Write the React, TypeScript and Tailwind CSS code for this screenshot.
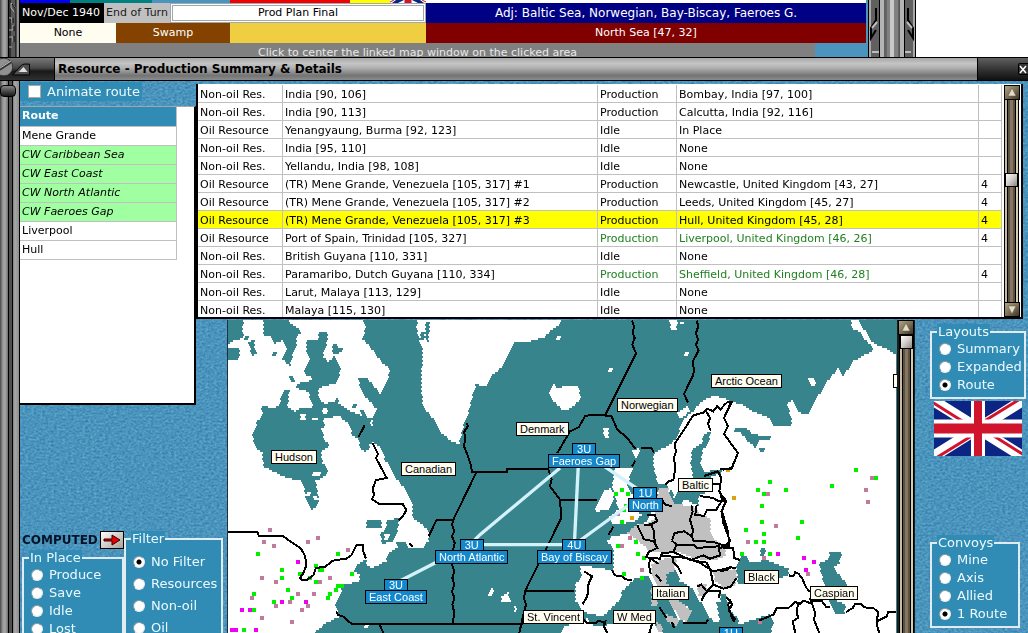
import React, { useMemo, useState } from 'react';

type Point = [number, number];

interface ResourceRow {
  kind: string;
  source: string;
  status: string;
  dest: string;
  turns?: string;
  green?: boolean;
  selected?: boolean;
}

const OIL = 'Oil Resource';
const NON_OIL = 'Non-oil Res.';

const RESOURCES: ResourceRow[] = [
  { kind: NON_OIL, source: 'India [90, 106]', status: 'Production', dest: 'Bombay, India [97, 100]' },
  { kind: NON_OIL, source: 'India [90, 113]', status: 'Production', dest: 'Calcutta, India [92, 116]' },
  { kind: OIL, source: 'Yenangyaung, Burma [92, 123]', status: 'Idle', dest: 'In Place' },
  { kind: NON_OIL, source: 'India [95, 110]', status: 'Idle', dest: 'None' },
  { kind: NON_OIL, source: 'Yellandu, India [98, 108]', status: 'Idle', dest: 'None' },
  { kind: OIL, source: '(TR) Mene Grande, Venezuela [105, 317] #1', status: 'Production', dest: 'Newcastle, United Kingdom [43, 27]', turns: '4' },
  { kind: OIL, source: '(TR) Mene Grande, Venezuela [105, 317] #2', status: 'Production', dest: 'Leeds, United Kingdom [45, 27]', turns: '4' },
  { kind: OIL, source: '(TR) Mene Grande, Venezuela [105, 317] #3', status: 'Production', dest: 'Hull, United Kingdom [45, 28]', turns: '4', selected: true },
  { kind: OIL, source: 'Port of Spain, Trinidad [105, 327]', status: 'Production', dest: 'Liverpool, United Kingdom [46, 26]', turns: '4', green: true },
  { kind: NON_OIL, source: 'British Guyana [110, 331]', status: 'Idle', dest: 'None' },
  { kind: NON_OIL, source: 'Paramaribo, Dutch Guyana [110, 334]', status: 'Production', dest: 'Sheffield, United Kingdom [46, 28]', turns: '4', green: true },
  { kind: NON_OIL, source: 'Larut, Malaya [113, 129]', status: 'Idle', dest: 'None' },
  { kind: NON_OIL, source: 'Malaya [115, 130]', status: 'Idle', dest: 'None' },
];

const ROUTE = [
  { name: 'Mene Grande', sea: false },
  { name: 'CW Caribbean Sea', sea: true },
  { name: 'CW East Coast', sea: true },
  { name: 'CW North Atlantic', sea: true },
  { name: 'CW Faeroes Gap', sea: true },
  { name: 'Liverpool', sea: false },
  { name: 'Hull', sea: false },
];

/* ---------- map data: three sheets, west to east, 3 units per pixel ---------- */

const MID = 762;
const EAST = 1482;

const pts = (text: string, dx = 0): Point[] =>
  text.trim().split(/\s+/).map(p => {
    const [x, y] = p.split(',').map(Number);
    return [x + dx, y] as Point;
  });

// Fills a polygon with 6-unit hexes, odd rows shifted by half a hex
const hexFill = (poly: Point[]) => {
  let d = '';
  const ys = poly.map(p => p[1]);
  const first = Math.floor(Math.min(...ys) / 6);
  const last = Math.ceil(Math.max(...ys) / 6);
  for (let row = first; row <= last; row++) {
    const y = row * 6 + 3;
    const shift = row % 2 ? 3 : 0;
    const xs: number[] = [];
    poly.forEach(([x1, y1], i) => {
      const [x2, y2] = poly[(i + 1) % poly.length];
      if (y1 <= y !== y2 <= y) xs.push(x1 + ((y - y1) * (x2 - x1)) / (y2 - y1));
    });
    xs.sort((a, b) => a - b);
    for (let i = 0; i + 1 < xs.length; i += 2) {
      const a = Math.round((xs[i] - shift) / 6) * 6 + shift;
      const b = Math.round((xs[i + 1] - shift) / 6) * 6 + shift;
      if (b > a) d += `M${a} ${row * 6}H${b}v6H${a}z`;
    }
  }
  return d;
};

const LAND: Point[][] = [
  // North America
  pts('0,0 405,0 420,30 408,60 435,90 465,130 492,155 482,195 462,228 445,205 420,180 398,180 400,205 420,225 436,255 452,275 440,300 440,330 425,320 412,350 400,385 418,400 440,370 460,385 480,430 510,480 538,515 560,560 560,600 590,620 606,640 606,670 590,690 550,690 540,670 512,670 515,690 490,702 480,730 440,750 424,745 420,725 395,740 385,760 405,770 395,792 350,800 340,840 325,860 340,895 300,915 276,936 260,950 0,950'),
  // Greenland
  pts('575,0 572,35 582,70 590,100 585,210 592,270 620,300 640,340 680,372 700,378 710,330 722,300 738,240 750,200 780,205 800,170 825,150 845,115 865,72 890,75 955,58 972,40 1002,20 1005,0'),
  // Iceland and small islands
  pts('206,225 222,200 235,212 250,205 295,205 303,240 284,262 252,280 240,270 225,255', MID),
  pts('366,330 388,330 384,345 390,362 378,362', MID),
  pts('384,150 396,150 396,162 384,162', MID),
  pts('228,54 240,54 240,66 228,66', MID),
  pts('612,102 624,102 624,114 612,114', MID),
  pts('600,10 612,10 612,18 600,18', MID),
  pts('564,6 594,6 588,40 576,36', MID),
  pts('28,815 42,810 36,832 26,832', MID),
  pts('66,835 84,822 92,850 62,852', MID),
  pts('100,860 112,870 104,882', MID),
  pts('588,285 625,262 630,280 600,302', MID),
  // Ireland and Britain
  pts('372,520 395,510 402,545 385,575 345,582 356,545', MID),
  pts('405,450 458,450 440,505 462,535 452,572 484,590 462,612 396,620 386,600 418,572 402,535 396,500', MID),
  pts('454,395 480,392 466,425', MID),
  // Scandinavia, Europe and Russia
  [
    ...pts('530,482 520,440 522,405 560,385 590,362 600,330 622,290 642,280 660,252 700,232 735,242', MID),
    ...pts('30,250 70,262 100,280 148,300 160,325 215,325 212,290 200,262 215,245 240,285 265,290 285,250 320,192 355,150 370,180 395,132 440,108 462,95 445,70 420,42 395,30 395,8 415,8 435,40 462,78 510,98 540,112 540,950 150,950 160,915 150,888 60,918 45,905 22,880 18,830 0,830', EAST),
    ...pts('720,915 700,915 680,880 660,850 640,812 600,790 588,755 560,762 560,800 600,850 638,880 622,912 598,905 580,870 545,815 520,800 505,775 470,778 430,815 415,850 385,880 365,895 320,885 300,870 288,850 285,800 306,780 300,742 370,752 400,760 402,690 380,672 400,652 440,650 470,622 500,612 512,588 530,565 535,510', MID),
  ],
  // North Africa
  pts('240,950 250,928 320,902 345,925 372,922 440,915 510,915 545,930 550,950', MID),
];

const SEA: Point[][] = [
  // Hudson Bay
  pts('106,264 128,264 128,274 156,266 176,212 190,216 184,266 206,281 226,268 262,268 258,308 290,300 300,325 282,332 300,370 310,385 285,400 290,435 305,452 300,470 268,490 280,552 260,578 240,545 230,490 190,482 150,465 112,445 110,405 86,385 80,345 95,310 110,290'),
  // Arctic channels
  pts('241,68 276,68 276,44 302,44 306,64 291,114 306,136 324,114 336,130 346,150 331,196 306,201 276,211 276,236 296,258 326,250 331,236 340,258 376,280 400,290 436,300 432,330 405,370 380,352 370,320 340,295 290,300 255,300 261,268 246,221 211,211 211,196 251,191 236,161 251,126 241,100'),
  pts('186,172 198,172 208,192 196,196'),
  pts('0,0 54,0 48,36 54,51 42,66 28,66 6,78 0,78'),
  pts('0,92 36,92 42,106 34,126 0,126'),
  pts('54,54 66,54 66,66 54,66'),
  pts('66,74 84,66 84,90 92,110 78,112'),
  pts('114,0 176,0 206,24 228,42 211,56 211,81 202,106 192,146 170,122 181,96 171,66 146,78 136,54 111,51'),
  pts('138,100 150,100 150,112 138,112'),
  pts('336,88 348,88 348,100 330,112 318,100 318,78 330,78'),
  pts('398,175 420,190 455,230 445,262 420,240 400,205'),
  pts('380,258 392,258 392,270 380,270'),
  pts('400,275 412,275 424,306 412,306'),
  // Gulf of St Lawrence
  pts('420,608 466,608 466,628 420,628'),
  pts('462,650 480,630 484,606 520,600 515,640 500,672 470,676'),
  pts('398,350 436,350 430,395 408,398'),
  pts('598,12 612,12 606,70 598,60'),
  pts('582,40 594,40 594,64 582,64'),
  // Baltic
  pts('636,395 664,378 672,348 694,342 688,364 668,400 660,440 676,462 728,452 728,462 688,478 690,520 655,532 656,562 636,556 610,540 606,562 580,560 590,522 604,500 640,482 632,440', MID),
  pts('525,495 560,500 575,520 590,560 575,560 566,512 540,512', MID),
  pts('762,330 790,330 782,340 762,342', MID),
  // White Sea
  pts('42,330 80,332 102,350 150,354 150,364 112,370 110,392 86,372 60,342', EAST),
  pts('118,390 132,390 132,402 118,402', EAST),
  // Black Sea, Azov, Caspian
  pts('62,715 78,716 84,728 112,735 132,722 152,730 206,752 206,772 175,780 172,798 52,796 50,745', EAST),
  pts('124,690 138,690 130,714 120,710', EAST),
  pts('328,704 366,704 358,735 340,748 366,780 384,806 340,842 376,862 372,890 346,890 326,842 310,790 297,735 325,725', EAST),
  // Aegean
  pts('710,850 742,850 748,878 770,895 776,912 720,912', MID),
  pts('500,0 532,0 532,112 510,98 460,76 436,40 425,0', EAST),
];

const OCCUPIED: Point[][] = [
  pts('536,512 562,508 578,545 582,560 640,562 660,590 690,600 690,640 700,660 735,684 738,712 700,728 650,722 600,705 506,700 490,680 440,645 470,622 505,615 525,600 530,572', MID),
  pts('512,740 560,720 590,722 582,760 560,768 560,795 600,850 636,880 620,912 600,902 580,870 545,820 518,780', MID),
  pts('512,810 532,812 532,862 516,868', MID),
  pts('560,890 600,905 590,925 560,910', MID),
  pts('528,905 550,930 545,945 530,935', MID),
  pts('700,760 745,752 770,765 765,805 735,812 705,790', MID),
  pts('0,760 45,752 48,795 0,810', EAST),
  pts('652,800 680,796 676,836 656,836', MID),
];

const SPECKS: Point[][] = [
  pts('222,288 238,288 238,304 222,304'),
  pts('288,270 304,270 304,288 288,288'),
  pts('245,175 257,175 257,186 245,186'),
  pts('258,462 282,462 282,472 258,472'),
  pts('240,522 252,522 252,534 240,534'),
  pts('262,536 274,536 274,548 262,548'),
  pts('474,650 492,650 486,664 474,664'),
  pts('414,918 426,918 426,930 414,930'),
  pts('264,176 288,186 282,206 270,200', EAST),
  pts('395,6 416,6 436,40 458,76 444,76 420,42 395,30', EAST),
];

const BORDERS: Point[][] = [
  pts('6,641 94,641 98,653 170,653 190,668 205,678 225,692 238,715 240,745 232,765 222,780 228,787 242,786 262,772 270,750 298,746 320,728 360,722 376,712 392,680 412,680 410,695 420,722'),
  pts('416,322 398,356'),
  pts('440,376 456,408 450,420 482,480 450,486 440,512 444,530 438,544 460,558 530,558 541,576 530,596 518,606'),
  pts('722,316 726,324 714,342 718,360 714,385 724,410 734,440 738,462 842,462 842,453 970,453'),
  pts('750,465 682,605 632,605 608,655'),
  pts('682,605 678,620 685,640 678,655 686,675 680,700 685,720 678,740 685,760 679,780 685,800 678,820 685,840 679,860 685,885 680,914'),
  pts('330,880 336,890 352,896 376,917 890,917'),
  pts('460,918 472,945'),
  pts('550,676 560,686'),
  pts('456,8 462,25 458,45 464,60 457,80 468,106 376,290 316,293 296,328 270,340 232,405', MID),
  pts('376,293 394,293 412,335 440,358 466,392', MID),
  pts('650,8 655,25 648,45 654,65 648,80 656,98 638,130 642,155 640,170 612,228 624,254', MID),
  pts('482,390 514,390 522,404', MID),
  pts('466,428 456,446', MID),
  pts('205,455 215,485 210,505 240,545 244,600 135,820 132,840 138,860 130,890 118,945', MID),
  pts('236,545 350,545', MID),
  pts('135,820 282,820', MID),
  pts('400,626 386,650', MID),
  pts('745,250 732,262 722,274 712,264 700,280 682,272 670,284 640,292 584,378 588,400 582,420 586,450 580,486 566,490 556,500', MID),
  pts('676,275 690,300 684,318 692,338', MID),
  pts('754,250 732,300 744,325 732,348 774,405 756,450 728,455', MID),
  pts('714,460 672,474', MID),
  pts('714,460 724,480 718,520 728,545 712,570 706,580', MID),
  pts('698,498 720,498', MID),
  pts('640,490 632,484 618,494', MID),
  pts('724,530 738,548 726,580 744,640 748,684 728,690', MID),
  pts('660,534 700,540 716,550 738,548', MID),
  pts('650,562 646,590 672,594 682,575 706,575', MID),
  pts('634,562 638,580 630,605 640,640 632,655', MID),
  pts('545,545 556,560 575,564', MID),
  pts('500,590 524,590 532,610 512,618 522,640 524,670 492,664 472,622', MID),
  pts('492,622 518,622', MID),
  pts('522,672 532,690 506,702 498,718 540,722 546,706 580,702', MID),
  pts('576,668 584,645 612,640 636,655 640,668 700,672 738,684', MID),
  pts('576,668 590,680 640,680 650,690 716,685 720,712 690,722 670,712 632,726 580,702 590,680', MID),
  pts('546,714 580,716 578,730 594,746 604,768', MID),
  pts('536,738 512,722 506,738 512,768', MID),
  pts('580,716 620,720 660,735 700,760 755,748', MID),
  pts('640,728 680,734 692,760 700,800 680,820 664,800 652,806', MID),
  pts('700,800 730,812 752,806 770,780', MID),
  pts('680,820 720,820 716,840', MID),
  pts('664,850 672,832 684,820', MID),
  pts('396,756 404,772 430,776 436,784 456,786', MID),
  pts('312,760 336,775 326,795 322,835 308,858', MID),
  pts('312,905 322,915 348,916 355,908 372,914', MID),
  pts('378,905 372,925 382,945', MID),
  pts('516,918 508,945', MID),
  pts('528,770 544,790', MID),
  pts('538,868 560,900', MID),
  pts('576,912 582,930', MID),
  pts('608,915 678,915 684,905', MID),
  pts('738,838 752,850 744,860 756,900 764,912', MID),
  pts('20,252 36,252 12,300 24,325 12,348 54,405 34,452 0,452', EAST),
  pts('0,520 6,545 18,550 4,580 10,615 30,668 12,686 0,690', EAST),
  pts('12,690 40,690 42,720 60,726', EAST),
  pts('0,760 22,755 30,748 48,750', EAST),
  pts('206,772 220,775 226,762 236,768 246,780 258,808 270,822', EAST),
  pts('30,845 36,860 26,878 46,905', EAST),
  pts('116,908 160,890 170,870 205,870 226,852 240,858 250,848 270,855 278,845', EAST),
  pts('236,852 230,880 234,900 218,910 226,945', EAST),
  pts('270,840 286,885 282,905 298,945', EAST),
  pts('270,848 305,848 318,866 330,868', EAST),
  pts('378,882 398,870 405,858 424,858 432,868 460,870 474,882 470,920 478,945', EAST),
  pts('470,910 500,895 505,882 540,882', EAST),
];

const LANES: Point[][] = [
  pts('520,790 640,728'),
  pts('730,682 762,650 1002,450'),
  pts('722,680 1022,680'),
  pts('295,440 283,680', MID),
  pts('360,436 490,525', MID),
  pts('290,675 450,558', MID),
];

const DOTS: { color: string; at: Point[] }[] = [
  {
    color: '#c07a9c',
    at: [
      ...pts('126,630 108,666 138,678 270,654 240,666 360,690 102,774 144,786 306,774 276,786 210,822 258,822 72,834 186,846 144,858 222,870 240,858 102,894 192,906'),
      ...pts('408,582 444,654 420,678 480,750', MID),
      ...pts('450,474 432,510 438,546 138,522 162,618 78,666 126,714 258,762 114,906', EAST),
    ],
  },
  {
    color: '#00f000',
    at: [
      ...pts('90,702 330,702 162,750 162,774 216,762 264,738 276,750 282,750 246,774 264,786 372,762 330,798 336,798 342,798 324,810 306,822 300,834 180,810 192,834 78,822 138,846 78,870 48,930'),
      ...pts('402,522 420,510 438,522 420,606 426,570 432,558 408,678 462,666 468,702 486,714 426,762 480,774', MID),
      ...pts('402,450 462,474 330,498 144,486 108,510 192,510 126,522 120,558 120,606 240,606 72,630 126,642 228,654 102,666 126,666 60,702 144,702', EAST),
    ],
  },
  {
    color: '#f000f0',
    at: [...pts('210,726 162,846 234,846 42,870 66,870 12,930 24,930 84,930'), ...pts('168,702 246,714 276,726 252,750', EAST)],
  },
  { color: '#dca010', at: [...pts('450,594 756,534', MID), ...pts('18,450', EAST)] },
];

const SEA_LABELS = [
  { name: 'Hudson', x: 43, y: 130 },
  { name: 'Canadian', x: 173, y: 142 },
  { name: 'Norwegian', x: 389, y: 78 },
  { name: 'Denmark', x: 288, y: 102 },
  { name: 'Arctic Ocean', x: 483, y: 54 },
  { name: 'Baltic', x: 450, y: 158 },
  { name: 'Italian', x: 424, y: 266 },
  { name: 'St. Vincent', x: 295, y: 290 },
  { name: 'W Med', x: 385, y: 290 },
  { name: 'Black', x: 516, y: 250 },
  { name: 'Caspian', x: 582, y: 266 },
];

const CONVOYS = [
  { name: 'Faeroes Gap', units: '3U', x: 320, y: 123 },
  { name: 'North', units: '1U', x: 400, y: 167 },
  { name: 'Bay of Biscay', units: '4U', x: 309, y: 219 },
  { name: 'North Atlantic', units: '3U', x: 207, y: 219 },
  { name: 'East Coast', units: '3U', x: 137, y: 259 },
  { name: 'E Med', units: '1U', x: 483, y: 307 },
];

const toPoints = (line: Point[]) => line.map(p => p.join(',')).join(' ');

const ConvoyMap: React.FC = () => {
  const shapes = useMemo(() => {
    const join = (polys: Point[][]) => polys.map(hexFill).join('');
    return { land: join(LAND), sea: join(SEA), specks: join(SPECKS), occupied: join(OCCUPIED) };
  }, []);

  return (
    <div className="relative flex-1 min-w-0 overflow-hidden bg-[#38848c] border-l border-[#203040] font-['Liberation_Sans',Arial,sans-serif] text-[11px]">
      <svg className="w-[668px] h-[313px] max-w-none" viewBox="6 6 2004 939" fill="none" shapeRendering="crispEdges" aria-label="Convoy map">
        <path d={shapes.land} fill="#fff" />
        <path d={shapes.sea} fill="#38848c" />
        <path d={shapes.occupied} fill="#c0c0c0" />
        <path d={shapes.specks} fill="#fff" />
        {DOTS.map(group => (
          <path key={group.color} fill={group.color} d={group.at.map(([x, y]) => `M${x} ${y}h12v12h-12z`).join('')} />
        ))}
        {BORDERS.map((line, i) => (
          <polyline key={i} points={toPoints(line)} stroke="#000" strokeWidth="6" />
        ))}
        <g stroke="#d4f2fc" strokeWidth="10" shapeRendering="auto">
          {LANES.map((line, i) => (
            <polyline key={i} points={toPoints(line)} />
          ))}
        </g>
      </svg>
      {SEA_LABELS.map(label => (
        <span
          key={label.name}
          className="absolute h-[14px] px-[3px] leading-[12px] whitespace-nowrap bg-[#fffcf0] border border-black text-black"
          style={{ left: label.x, top: label.y }}
        >
          {label.name}
        </span>
      ))}
      <span className="absolute right-0 top-[54px] w-1 h-[14px] bg-[#fffcf0] border-y border-l border-black" />
      {CONVOYS.map(convoy => (
        <div key={convoy.name} className="absolute flex flex-col items-center text-white whitespace-nowrap" style={{ left: convoy.x, top: convoy.y }}>
          <span className="h-[11px] px-1 leading-[10px] bg-[#1488cc] border border-b-0 border-black">{convoy.units}</span>
          <span className="h-[14px] px-[3px] leading-[12px] bg-[#1488cc] border border-black">{convoy.name}</span>
        </div>
      ))}
    </div>
  );
};

/* ---------- window furniture ---------- */

const Texture: React.FC = () => (
  <svg className="absolute inset-0 w-full h-full opacity-50 mix-blend-overlay pointer-events-none" aria-hidden="true">
    <filter id="cloth" colorInterpolationFilters="sRGB">
      <feTurbulence type="fractalNoise" baseFrequency="0.35 0.5" numOctaves="2" />
      <feColorMatrix type="saturate" values="0" />
      <feComponentTransfer>
        <feFuncA type="linear" slope="0" intercept="1" />
      </feComponentTransfer>
    </filter>
    <rect width="100%" height="100%" filter="url(#cloth)" />
  </svg>
);

const ScrollButton: React.FC<{ up?: boolean }> = ({ up }) => (
  <button
    type="button"
    aria-label={up ? 'Scroll up' : 'Scroll down'}
    className="w-4 h-[15px] shrink-0 flex items-center justify-center border border-black bg-linear-to-br from-[#b0a488] via-[#7c7058] to-[#3c3426]"
  >
    <svg width="10" height="9" viewBox="0 0 10 9">
      <path d={up ? 'M5 0 9 8H1z' : 'M5 9 9 1H1z'} fill="#e4dcc4" stroke="#5c523c" strokeWidth="0.5" />
    </svg>
  </button>
);

const TRACK =
  'bg-[linear-gradient(to_right,#000_0_1px,#c8bca4_1px_3px,#000_3px_4px,#5c5040_4px_6px,#847660_6px_9px,#5c5040_9px_11px,#000_11px_12px,#d8ccb4_12px_14px,#000_14px)]';

const Thumb = () => <div className="w-[13px] h-[14px] mx-auto shrink-0 border border-black bg-linear-to-br from-white via-[#d0ccc8] to-[#8c8884]" />;

const METAL =
  'bg-[linear-gradient(to_right,#555_0_1px,#8c8c8c_2px,#a8a8a8_5px,#6c6c6c_8px,#000_8px_9px,#505050_9px_12px,#000_12px_13px,#808080_13px,#a8a8a8_15px,#8c8c8c_19px,#000_19px)]';

const Radio: React.FC<{ group: string; label: string; checked: boolean; onSelect: () => void; tall?: boolean }> = ({ group, label, checked, onSelect, tall }) => (
  <label className={`flex items-center gap-1.5 whitespace-nowrap ${tall ? 'h-[22px]' : 'h-[18px]'}`}>
    <input
      type="radio"
      name={group}
      checked={checked}
      onChange={onSelect}
      className="appearance-none w-3 h-3 shrink-0 rounded-full bg-white border border-[#8a9aa4] border-r-[#e8e8e8] border-b-[#e8e8e8] checked:bg-[radial-gradient(circle,#000_0_2px,#fff_3px)]"
    />
    {label}
  </label>
);

const RadioGroup: React.FC<{ title: string; options: string[]; initial?: string; tall?: boolean; className?: string }> = ({ title, options, initial = '', tall, className = '' }) => {
  const [value, setValue] = useState(initial);
  return (
    <fieldset className={`relative min-w-0 border-2 border-[#e0ecf0] bg-[#308cb4] pl-[7px] pb-[3px] text-[13px] leading-4 text-[#ecfaff] ${tall ? 'pt-1' : ''} ${className}`}>
      <legend className="-ml-0.5 px-px bg-[#308cb4]">{title}</legend>
      {options.map(o => (
        <Radio key={o} group={title} label={o} tall={tall} checked={value === o} onSelect={() => setValue(o)} />
      ))}
    </fieldset>
  );
};

const UnionFlag = ({ className }: { className?: string }) => (
  <svg className={className} viewBox="0 0 88 55" preserveAspectRatio="none" aria-label="United Kingdom">
    <rect width="88" height="55" fill="#0c2484" />
    <path d="M0 0 88 55M88 0 0 55" stroke="#fff" strokeWidth="11" />
    <path d="M-2 1 44 30M90 54 44 25M86 -2 44 24M2 57 44 31" stroke="#d0142c" strokeWidth="3" />
    <path d="M44 0V55" stroke="#fff" strokeWidth="14" />
    <path d="M0 27.5H88" stroke="#fff" strokeWidth="18" />
    <path d="M44 0V55" stroke="#d0142c" strokeWidth="8" />
    <path d="M0 27.5H88" stroke="#d0142c" strokeWidth="10" />
  </svg>
);

const PhaseWindow: React.FC = () => (
  <header className="relative h-[57px] shrink-0 flex bg-white overflow-hidden">
    <div className={`w-5 shrink-0 ${METAL}`}>
      <svg className="w-full h-full" viewBox="0 0 20 57" fill="none">
        <path d="M9 0h7v57H9z" fill="#585858" />
        <path d="M10 0v57M16 0v57" stroke="#000" />
        <path d="m11 3 4 4v6l-4-5zM12 18h-3M12 23v-5M9 30h4v-5M9 37h4v5M9 47h3" stroke="#b0b0b0" />
        <path d="m12 4 3 4v5M13 18v5M14 26v5M14 36v6" stroke="#000" />
      </svg>
    </div>
    <div className="flex-1 min-w-0 flex flex-col bg-[#4a94bd]">
      <div className="h-[3px] flex">
        <div className="w-[50px] bg-[#0000f0]" />
        <div className="w-[82px] bg-[#008080]" />
        <div className="w-[78px]" />
        <div className="w-[120px] bg-[#f00000]" />
        <div className="w-10 bg-[#ffff00]" />
        <svg className="w-9 h-[3px]" viewBox="0 0 36 3" aria-hidden="true">
          <path d="M0 0h36v3H0z" fill="#fff" />
          <path d="M6 0h8l-6 3H2zM30 0h-8l6 3h6z" fill="#0c2484" />
          <path d="M15 0h6v3h-6zM0 2l4-2M36 2l-4-2" fill="#d0142c" stroke="#d0142c" />
        </svg>
        <div className="flex-1 bg-white" />
      </div>
      <div className="h-5 flex text-[11px] leading-5">
        <div className="w-[84px] pl-0.5 bg-black text-white whitespace-nowrap">Nov/Dec 1940</div>
        <div className="w-[66px] bg-[#c0c0c0] text-[#202020] whitespace-nowrap text-center">End of Turn</div>
        <input
          type="text"
          readOnly
          aria-label="Phase"
          value="Prod Plan Final"
          className="w-[256px] h-5 text-center bg-white text-black border-[3px] border-double border-[#a0a8ac]"
        />
        <div className="flex-1 bg-[#000084] text-[12px] text-white text-center">Adj: Baltic Sea, Norwegian, Bay-Biscay, Faeroes G.</div>
      </div>
      <div className="h-5 flex text-[11px] leading-5 text-white text-center">
        <div className="w-24 bg-[#fffcf0] text-black">None</div>
        <div className="w-[114px] bg-[#844200]">Swamp</div>
        <div className="w-[196px] bg-[#efce42]" />
        <div className="flex-1 bg-[#800000]">North Sea [47, 32]</div>
      </div>
      <div className="flex-1 mr-[51px] bg-[#808080] text-[11px] leading-5 text-[#e8e8e8] text-center">
        Click to center the linked map window on the clicked area
      </div>
    </div>
    <div className="w-[50px] shrink-0 pl-0.5 bg-[#4a94bd]">
      <svg className="w-12 h-full" viewBox="0 0 48 57" fill="none">
        <rect width="48" height="57" fill="#606060" />
        <path d="M0.5 0V57M11.5 0V57M36.5 0V57M47.5 0V57" stroke="#000" />
        <path d="M2 0V57M46 0V57" stroke="#a8a8a8" strokeWidth="2" />
        <path d="M14 0V57M34 0V57" stroke="#b4b4b4" strokeWidth="4" />
        <path d="M24 0V57" stroke="#808080" strokeWidth="14" />
        <path d="M18 0V57M31 0V57" stroke="#484848" />
        <path d="M24 0V57" stroke="#c8c8c8" strokeWidth="4" />
        <path d="M8 8v12l-5 8v10l5-8M40 8v12l5 8v10l-5-8" stroke="#000" strokeWidth="2" />
        <path d="M9 22 4 28M39 22l5 6M4 52h7M37 52h6" stroke="#bbb" strokeWidth="2" />
      </svg>
    </div>
    <div className="w-28 shrink-0" />
  </header>
);

const TitleBar: React.FC = () => (
  <div className="relative h-6 shrink-0 flex items-stretch border-y border-black bg-[linear-gradient(to_bottom,#a8a8a8,#c4c4c4_25%,#b0b0b0_45%,#747474_80%,#8c8c8c)]">
    <button type="button" aria-label="Roll up" className="w-[55px] shrink-0 border-r border-black bg-[linear-gradient(to_bottom,#787878,#484848_45%,#181818_60%,#303030)]">
      <svg className="w-full h-full" viewBox="0 0 55 22" fill="none">
        <circle cx="4" cy="9" r="9" fill="#909090" stroke="#333" />
        <path d="M-3 13 11 4" stroke="#333" strokeWidth="3" />
        <path d="M-3 12 11 3" stroke="#ccc" />
        <path d="M13 17 21 8q2-2 4-2h5v11z" fill="#505050" stroke="#000" />
        <path d="M19 14h9l-4-5z" fill="#e0e0e0" />
      </svg>
    </button>
    <h1 className="flex-1 pl-[3px] text-[12px] font-bold leading-[22px] text-black whitespace-nowrap">Resource - Production Summary &amp; Details</h1>
    <button type="button" aria-label="Close" className="w-[51px] shrink-0 flex items-center justify-end border-l border-black bg-linear-to-b from-[#606060] to-[#101010]">
      <svg width="10" height="14" viewBox="0 0 10 14" fill="none">
        <rect x="0.5" y="1.5" width="14" height="11" rx="1" fill="#333" stroke="#000" />
        <path d="m2 4 6 7M8 4l-6 7" stroke="#fff" strokeWidth="1.5" />
      </svg>
    </button>
  </div>
);

const RouteList: React.FC = () => {
  const [animate, setAnimate] = useState(false);
  return (
    <section className="relative col-start-1 row-start-1 row-span-2 self-start">
      <label className="flex items-center gap-1.5 w-[122px] h-[19px] mt-px pl-2 bg-[#308cb4] text-[13px] leading-4 text-[#ecfaff] whitespace-nowrap">
        <input
          type="checkbox"
          checked={animate}
          onChange={e => setAnimate(e.target.checked)}
          className="appearance-none w-[13px] h-[13px] bg-white border border-[#b0a89c] checked:bg-black"
        />
        Animate route
      </label>
      <div className="mt-[5px] h-[299px] bg-white border-t border-t-[#a0a8ac] border-r-2 border-b-2 border-black">
        <table className="w-[157px] border-collapse text-[11px] text-black text-left">
          <thead>
            <tr className="h-[19px] bg-[#308cb4] text-white">
              <th className="p-0 pl-0.5 font-bold leading-[18px] border-r border-b border-[#c0c0c0]">Route</th>
            </tr>
          </thead>
          <tbody>
            {ROUTE.map(stop => (
              <tr key={stop.name} className={stop.sea ? 'h-[19px] bg-[#a0ffa0] italic' : 'h-[19px]'}>
                <td className="p-0 pl-0.5 leading-[18px] border-r border-b border-[#c0c0c0]">{stop.name}</td>
              </tr>
            ))}
          </tbody>
        </table>
      </div>
    </section>
  );
};

const CELL = 'p-0 pt-0.5 pl-0.5 leading-[15px] border-r border-b border-[#c0c0c0] whitespace-nowrap overflow-hidden';

const ResourceTable: React.FC = () => (
  <section className="relative col-start-2 col-span-3 row-start-1 mt-[3px] mr-[5px] h-[235px] flex overflow-hidden bg-white border-l-2 border-b-2 border-r-2 border-black">
    <table className="flex-1 table-fixed border-separate border-spacing-0 self-start mt-px text-[11px] text-black">
      <colgroup>
        <col className="w-[85px]" />
        <col />
        <col className="w-[79px]" />
        <col className="w-[302px]" />
        <col className="w-[23px]" />
      </colgroup>
      <tbody>
        {RESOURCES.map((row, i) => (
          <tr key={i} className={row.selected ? 'h-[18px] bg-[#ffff00]' : 'h-[18px]'}>
            <td className={CELL}>{row.kind}</td>
            <td className={CELL}>{row.source}</td>
            <td className={`${CELL} ${row.green ? 'text-[#208020]' : ''}`}>{row.status}</td>
            <td className={`${CELL} ${row.green ? 'text-[#208020]' : ''}`}>{row.dest}</td>
            <td className={CELL}>{row.turns}</td>
          </tr>
        ))}
      </tbody>
    </table>
    <div className="w-[19px] shrink-0 flex flex-col items-center pt-px">
      <ScrollButton up />
      <div className={`w-[15px] flex-1 pt-[73px] ${TRACK}`}>
        <Thumb />
      </div>
      <ScrollButton />
    </div>
  </section>
);

const App: React.FC = () => {
  return (
    <div className="h-screen flex flex-col overflow-hidden font-['DejaVu_Sans',Verdana,sans-serif]">
      <PhaseWindow />
      <TitleBar />
      <main className="relative isolate flex-1 min-h-0 flex bg-[#4a94bd]">
        <Texture />
        <div className={`relative w-5 shrink-0 pt-1 ${METAL}`}>
          <div className="w-4 h-3 rounded-sm border border-black bg-linear-to-b from-[#888] to-[#181818]" />
        </div>
        <div className="relative flex-1 min-w-0 grid grid-cols-[176px_31px_1fr_113px] grid-rows-[239px_1fr_102px]">
          <RouteList />
          <ResourceTable />

          <section className="relative col-start-1 col-span-2 row-start-3 flex overflow-hidden">
            <div className="w-[104px] shrink-0 pl-0.5">
              <div className="flex items-center justify-between h-[18px] mb-px">
                <span className="text-[12px] font-bold text-[#041428]">COMPUTED</span>
                <button type="button" aria-label="Show computed" className="w-6 h-[18px] shrink-0 flex items-center justify-center border border-black bg-linear-to-br from-white to-[#a8a098]">
                  <svg width="18" height="12" viewBox="0 0 18 12">
                    <path d="M1 5h8V1l8 5-8 5V7H1z" fill="#e80000" stroke="#300" />
                  </svg>
                </button>
              </div>
              <RadioGroup title="In Place" options={['Produce', 'Save', 'Idle', 'Lost']} />
            </div>
            <RadioGroup title="Filter" options={['No Filter', 'Resources', 'Non-oil', 'Oil']} initial="No Filter" tall className="w-[99px] shrink-0 self-start" />
          </section>

          <section className="relative col-start-3 row-start-2 row-span-2 min-h-0 flex">
            <ConvoyMap />
            <div className="w-[18px] shrink-0 flex flex-col items-center bg-[#1c1c1c]">
              <ScrollButton up />
              <div className={`w-[15px] flex-1 ${TRACK}`}>
                <Thumb />
              </div>
            </div>
          </section>

          <aside className="relative col-start-4 row-start-2 row-span-2 flex flex-col items-start pl-[15px] pt-1 pb-[5px]">
            <RadioGroup title="Layouts" options={['Summary', 'Expanded', 'Route']} initial="Route" className="w-24" />
            <UnionFlag className="w-[88px] h-[55px] ml-1 mt-0.5" />
            <RadioGroup title="Convoys" options={['Mine', 'Axis', 'Allied', '1 Route']} initial="1 Route" className="w-[90px] mt-auto" />
          </aside>
        </div>
      </main>
    </div>
  );
};

export default App;
